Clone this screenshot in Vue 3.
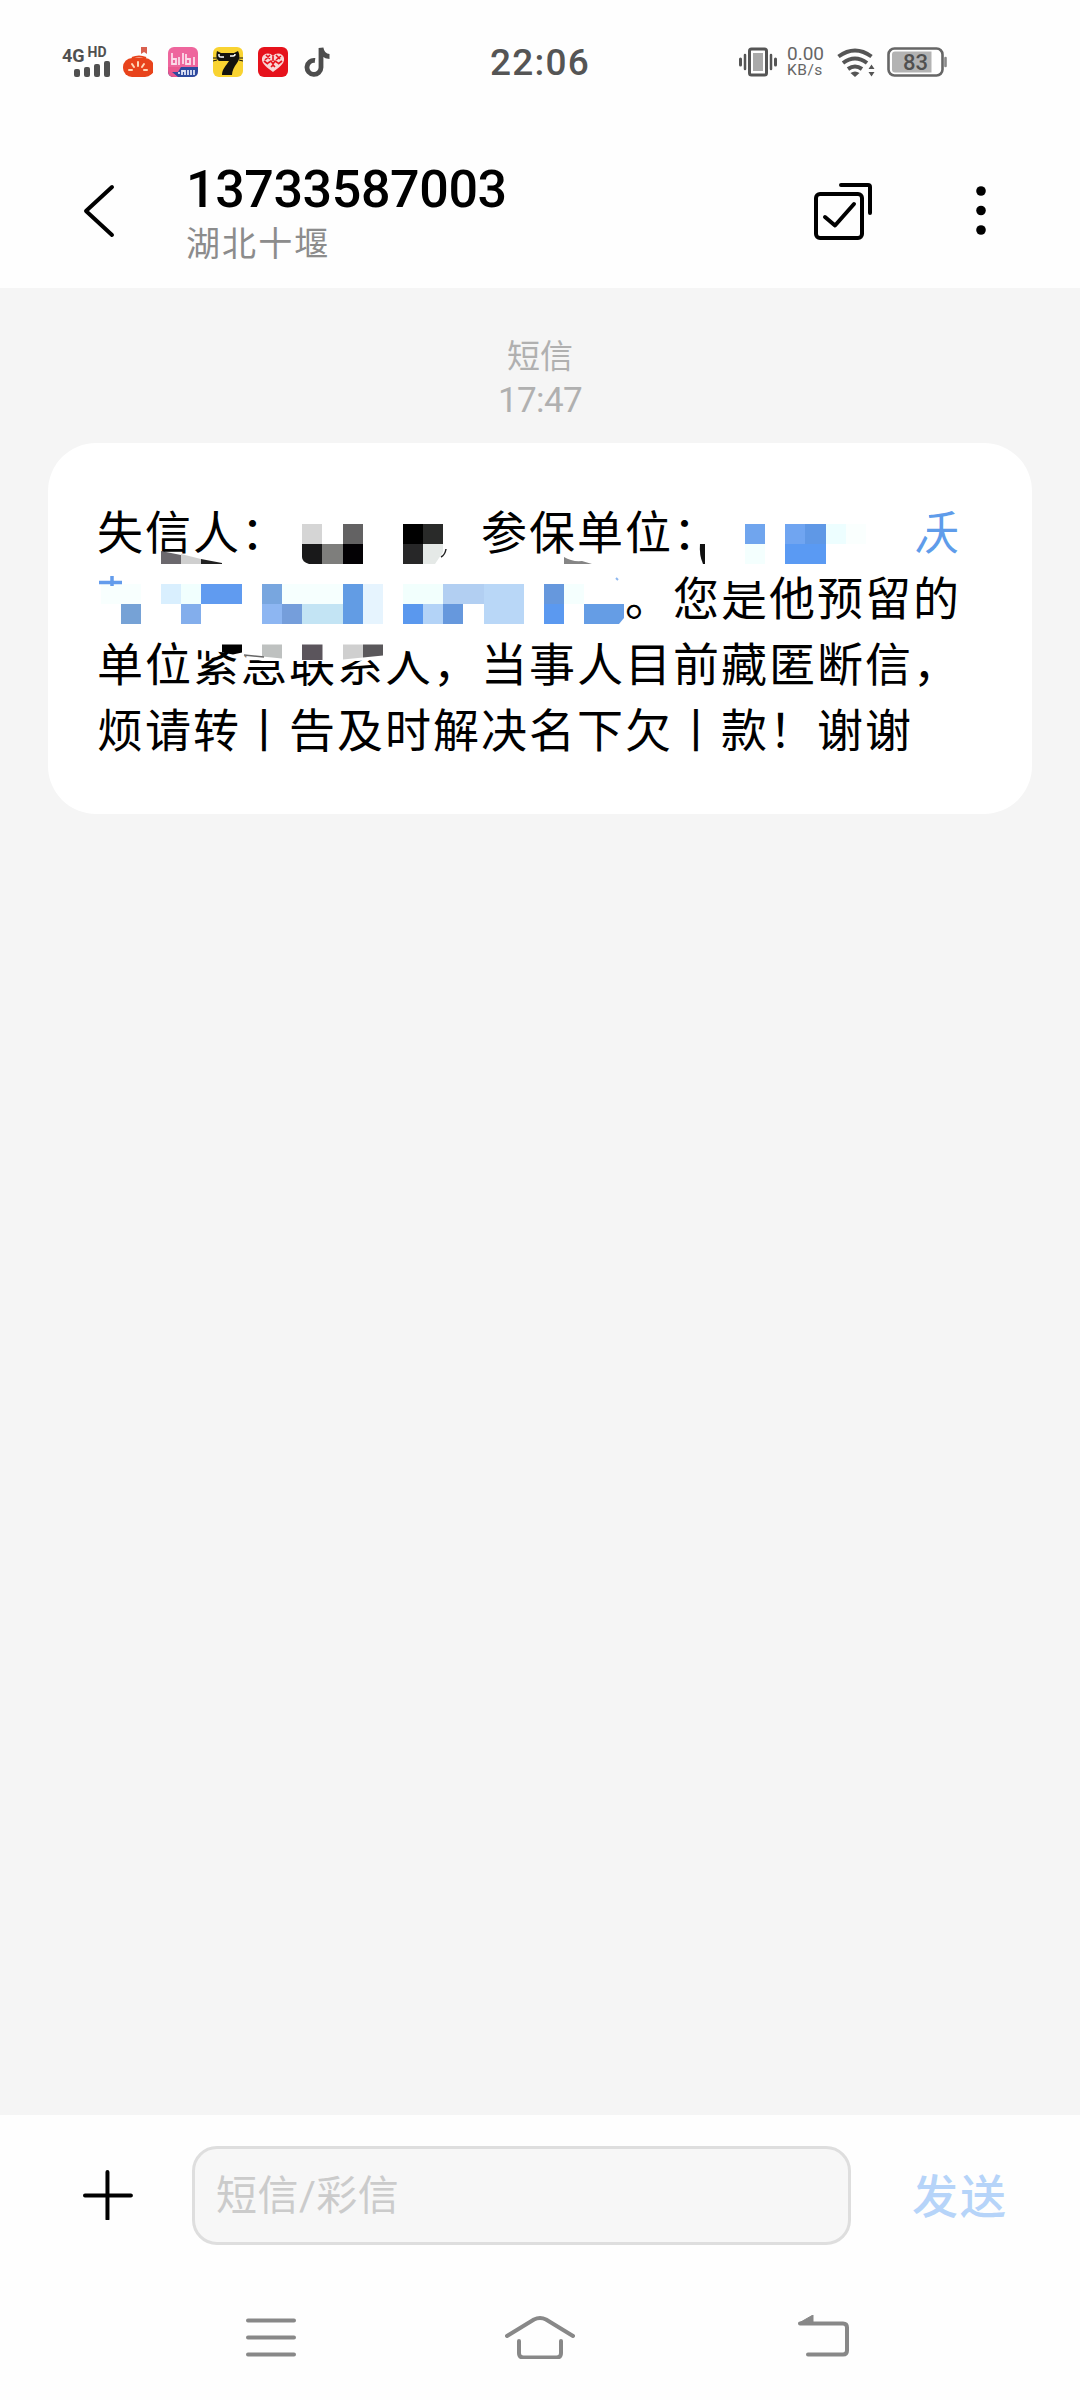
<template>
  <div class="phone">
    <div class="status-bar">
      <div class="status-left">
        <svg class="signal" width="46" height="34" viewBox="0 0 46 34">
          <text x="0" y="17" font-size="18" font-weight="700">4G</text>
          <text x="25.5" y="12" font-size="14" font-weight="700">HD</text>
          <rect x="12" y="24" width="6" height="8" rx="2" />
          <rect x="22" y="22" width="6" height="10" rx="2" />
          <rect x="32" y="19" width="6" height="13" rx="2" />
          <rect x="42" y="16" width="6" height="16" rx="2" />
        </svg>
        <svg width="30" height="30" viewBox="0 0 30 30">
          <path d="M18 0h6v7l-3-2-3 2z" fill="#d9604f" />
          <rect x="0" y="11" width="31" height="19" rx="9" fill="#e8431b" />
          <path d="M9 11q7-3 14 0" stroke="#e8431b" stroke-width="2" fill="none" />
          <path
            d="M15 15v4M9 17l2 3M21 17l-2 3M6 23l3 0M24 23h-3"
            stroke="#ffd9b8"
            stroke-width="2"
            stroke-linecap="round"
          />
        </svg>
        <svg width="30" height="30" viewBox="0 0 30 30">
          <rect width="30" height="30" rx="6" fill="#ee669d" />
          <path d="M0 20h30v4q0 6-6 6H6q-6 0-6-6z" fill="#2c4a9e" />
          <path d="M0 20h13l-3 5H4l6 5H6q-6 0-6-6z" fill="#e9578f" />
          <path
            d="M4 6v11h4v-5H4M11 10v8M15 6v11M18 7v10h4v-5h-4M26 10v8"
            stroke="#fbdce9"
            stroke-width="1.8"
            fill="none"
          />
          <path d="M11 27v-2M14 28v-4h3v4M20 28v-5M23 28v-5M26 28v-5" stroke="#dfe4f5" stroke-width="1.8" fill="none" />
        </svg>
        <svg width="30" height="30" viewBox="0 0 30 30">
          <rect width="30" height="30" rx="6" fill="#f9d331" />
          <path
            d="M4 4l4 2h13l4-2c2 4 2 8-1 12-3 4-5 8-5 12H9c0-6 4-9 7-14H6C3 12 3 8 4 4z"
            fill="#14130e"
          />
          <path d="M6 7v2q0 1 2 1h3M17 9h3q2 0 2-2" stroke="#fff" stroke-width="1.5" fill="none" />
          <path d="M0 11h4M0 14l4-1M26 11h4M26 13l4 1" stroke="#14130e" />
        </svg>
        <svg width="30" height="30" viewBox="0 0 30 30">
          <rect width="30" height="30" rx="6" fill="#e6121c" />
          <path
            d="M15 25C10 21 3 17 4 11c1-5 8-6 11-2 3-4 10-3 11 2 1 6-6 10-11 14z"
            fill="#f8d6d5"
          />
          <path
            d="M8 8l4 4M12 8l-5 5M18 8l4 4M23 9l-5 4M10 16l3-2 2 3 2-3 3 2M13 20l2-2 2 2M15 9v5M6 14l4 3M24 14l-4 3"
            stroke="#e6121c"
            stroke-width="1.6"
            fill="none"
          />
        </svg>
        <svg width="30" height="30" viewBox="0 0 30 30">
          <path
            d="M12 13.5a7 7 0 1 0 6 7V1c1 6 4 8.500 8.500 8.500"
            stroke="#4d4d4d"
            stroke-width="4.800"
            fill="none"
          />
        </svg>
      </div>
      <div class="clock">22:06</div>
      <div class="status-right">
        <svg width="38" height="30" viewBox="0 0 38 30">
          <rect x="10.500" y="2" width="17" height="26" rx="2" fill="#fff" stroke="#555" stroke-width="3" />
          <rect x="14" y="6" width="10" height="18" fill="#aaa" />
          <path d="M6 8v14M32 8v14" stroke="#555" stroke-width="2.500" stroke-linecap="round" />
          <path d="M1.500 12v6M36.500 12v6" stroke="#555" stroke-width="3" stroke-linecap="round" />
        </svg>
        <div class="net-speed">
          <span>0.00</span>
          <span>KB/s</span>
        </div>
        <svg width="40" height="30" viewBox="0 0 40 30">
          <g fill="none" stroke="#555" stroke-width="4">
            <path d="M1.500 9.500q16.500-12 33 0" />
            <path d="M6 16q12-9 24 0" />
            <path d="M11 22q7-5 14 0" />
          </g>
          <path d="M13.500 26q4.500-3 9 0L18 30z" fill="#555" />
          <path d="M31.500 22l3-4.500 3 4.500zM31.500 25h6l-3 4.500z" fill="#555" />
        </svg>
        <svg class="battery" width="61" height="30" viewBox="0 0 61 30">
          <rect x="1.500" y="1.500" width="54" height="27" rx="6" fill="#fff" stroke="#666" stroke-width="2.600" />
          <path d="M8 4.500h36.500v21H8q-3 0-3-3v-15q0-3 3-3z" fill="#b3b3b3" />
          <path d="M58.500 11v8" stroke="#888" stroke-width="2.600" stroke-linecap="round" />
          <text x="16" y="23" font-size="22" font-weight="500" textLength="25">83</text>
        </svg>
      </div>
    </div>

    <header class="header">
      <svg class="back" width="34" height="54" viewBox="0 0 34 54">
        <path d="M29 3L3 27l26 24" />
      </svg>
      <div class="contact">
        <div class="number">13733587003</div>
        <div class="region">湖北十堰</div>
      </div>
      <svg class="select" width="58" height="58" viewBox="0 0 58 58">
        <rect x="2" y="12" width="46" height="44" rx="4" />
        <path d="M11 35l10 8.500L40 22" />
        <path d="M27 3h27q2 0 2 2v26" />
      </svg>
      <svg width="10" height="50" viewBox="0 0 10 50">
        <circle cx="5" cy="5" r="4.800" />
        <circle cx="5" cy="24.500" r="4.800" />
        <circle cx="5" cy="44" r="4.800" />
      </svg>
    </header>

    <main class="thread">
      <div class="stamp">
        <span class="kind">短信</span>
        <span class="time">17:47</span>
      </div>
      <div class="bubble">
        <p>失信人：　　　　参保单位：　　　　<span class="link">沃</span></p>
        <p>　　　　　　　　　　　。您是他预留的</p>
        <p>单位紧急联系人，当事人目前藏匿断信，</p>
        <p>烦请转丨告及时解决名下欠丨款！谢谢</p>
        <!-- pixelated areas over the private parts of the message -->
        <svg class="mosaic" width="984" height="371" viewBox="48 443 984 371">
          <path d="M186 638h50l14 12h150l20 3v-15h-20v14l-16 6-34 3-80 0-28-7-56-5z" fill="#fff" />
          <path d="M240 640h140v19l-22 2h-96l-22-6z" fill="#fff" />
          <path d="M724 574h36v7h-36z" fill="#fff" />
          <path d="M912 508h18l-4 26h-14z" fill="#fff" />
          <rect
            v-for="(b, i) in blocks"
            :key="i"
            :x="b[0]"
            :y="b[1]"
            :width="b[2]"
            :height="b[3]"
            :fill="b[4]"
            shape-rendering="crispEdges"
          />
          <path d="M161 551l20 4v9h-20z" fill="#6b686d" />
          <path d="M181 554l20 5v5h-20z" fill="#cfcfcf" />
          <path d="M201 559l21 4v1h-21z" fill="#222" />
          <path d="M302 544h20v20h-13q-7-2-7-7z" fill="#19191a" />
          <path d="M423 544h20v8l-8 12h-12z" fill="#e5e9e7" />
          <path d="M446 549q-1 6-5 8" stroke="#222" stroke-width="1.500" fill="none" />
          <path d="M564 557q8 5 18 4l10 3h-28z" fill="#858585" />
          <path d="M700 544h5v20h-2q-4-9-3-20z" fill="#111" />
          <path d="M222 644.500h20v8l-9 2-11-2z" fill="#000" />
          <path d="M262 644.500h20v14l-20-2z" fill="#bec1c0" />
          <path d="M302 644.500h20.500v15.500h-20.500z" fill="#5b555c" />
          <path d="M343 644.500h20v13l-20 2z" fill="#cfcfcf" />
          <path d="M363 644.500h20v11l-20 2z" fill="#5a585b" />
          <path d="M244 655l20 2" stroke="#666" stroke-width="1.500" />
          <path d="M584 604h40v14l-5 6h-35z" fill="#659de5" />
          <path d="M99 582.500h23M112 576v10" stroke="#639cec" stroke-width="3.500" fill="none" />
          <path d="M616 578l2 2" stroke="#8db7ef" stroke-width="2" />
        </svg>
      </div>
    </main>

    <footer class="composer">
      <svg class="plus" width="50" height="50" viewBox="0 0 50 50">
        <path d="M2 25.500h46M24.500 2v47" />
      </svg>
      <div class="input">短信/彩信</div>
      <div class="send">发送</div>
    </footer>

    <nav class="nav">
      <svg width="50" height="44" viewBox="0 0 50 44">
        <path d="M2 5.500h46M2 22.500h46M2 39.500h46" />
      </svg>
      <svg class="home" width="70" height="44" viewBox="0 0 70 44">
        <path d="M2 21L29 4.500q6-3 12 0L68 21" />
        <path d="M14 26v12q0 4.500 4.500 4.500h33q4.500 0 4.500-4.500V26" />
      </svg>
      <svg width="52" height="44" viewBox="0 0 52 44">
        <path d="M2 8.500h43q4 0 4 4v23q0 4-4 4H10" />
        <path class="tip" d="M1 8L15 0v8z" />
      </svg>
    </nav>
  </div>
</template>

<script setup>
// x, y, width, height, colour
const blocks = [
  [302, 524, 20, 20, "#d5d5d5"],
  [342.5, 524, 20, 20, "#636263"],
  [322, 544, 20.5, 20, "#7e7e7c"],
  [342.5, 544, 20, 20, "#030104"],
  [403, 524, 20, 20, "#000"],
  [423, 524, 20, 20, "#292a29"],
  [403, 544, 20, 20, "#272728"],
  [745, 524, 20, 20, "#70a5ee"],
  [745, 544, 20, 20, "#f4fffe"],
  [785, 524, 20, 20, "#70a5f1"],
  [805, 524, 21, 20, "#5f98e6"],
  [785, 544, 41, 20, "#5a9af3"],
  [826, 524, 20, 20, "#edfeff"],
  [846, 524, 20, 20, "#fafffe"],
  [101, 584, 40, 20, "#f8fffe"],
  [121, 604, 20, 20, "#76a2d6"],
  [161, 584, 20, 20, "#d9effe"],
  [181, 584, 20, 20, "#f1fffe"],
  [201, 584, 41, 20, "#609bf0"],
  [181, 604, 20, 20, "#83aeec"],
  [262, 584, 20, 20, "#78a6df"],
  [282, 584, 60.5, 20, "#f6fffe"],
  [262, 604, 20, 20, "#8db6f2"],
  [282, 604, 20, 20, "#759edb"],
  [302, 604, 40.5, 20, "#c3e4f4"],
  [342.5, 584, 20, 40, "#629ce4"],
  [363, 584, 20, 40, "#e6f4fe"],
  [403, 584, 40, 20, "#f2fffd"],
  [403, 604, 20, 20, "#5a98ee"],
  [423, 604, 20, 20, "#b3d3f7"],
  [443, 584, 41, 20, "#b2cff2"],
  [443, 604, 20, 20, "#6698dd"],
  [484, 584, 40, 40, "#b9d7f7"],
  [544, 584, 20, 20, "#6698dd"],
  [544, 604, 20, 20, "#5b99f0"],
  [564, 584, 20, 20, "#f5fffe"],
];
</script>

<style>
body {
  margin: 0;
  background-color: #fff;
}
</style>

<style scoped>
.phone {
  width: 1080px;
  height: 2400px;
  display: flex;
  flex-direction: column;
  background-color: #fefefe;
  font-family: Roboto, "Noto Sans CJK SC", sans-serif;
  overflow: hidden;
}
.status-bar {
  height: 124px;
  padding: 0 62px;
  box-sizing: border-box;
  display: grid;
  grid-template-columns: 1fr auto 1fr;
  align-items: center;
  color: #555;
}
.status-left,
.status-right {
  display: flex;
  align-items: center;
}
.status-left {
  gap: 15px;
}
.status-right {
  justify-content: flex-end;
  gap: 10px;
  margin-right: 70px;
}
.signal,
.battery {
  fill: #505050;
  overflow: visible;
}
.clock {
  font-size: 37px;
  font-weight: 500;
  letter-spacing: 1.2px;
}
.net-speed {
  width: 40px;
  display: flex;
  flex-direction: column;
  font-size: 19px;
  line-height: 17px;
  color: #666;
}
.net-speed span:last-child {
  font-size: 15.5px;
  letter-spacing: 0.5px;
}
.header {
  height: 164px;
  padding: 9px 94px 0 83px;
  box-sizing: border-box;
  display: flex;
  align-items: center;
}
.back,
.select,
.plus {
  fill: none;
  stroke: #000;
  stroke-width: 4;
  stroke-linecap: round;
  stroke-linejoin: round;
}
.contact {
  flex: 1;
  margin-left: 69px;
  padding-top: 4px;
}
.number {
  font-size: 52px;
  font-weight: 500;
  line-height: 62px;
  color: #000;
  letter-spacing: -0.4px;
}
.region {
  font-size: 34px;
  line-height: 46px;
  letter-spacing: 2.1px;
  color: #8c8c8c;
}
.select {
  margin-right: 104px;
}
.thread {
  flex: 1;
  padding: 47px 48px 0;
  background-color: #f5f5f5;
}
.stamp {
  height: 108px;
  display: flex;
  flex-direction: column;
  align-items: center;
  color: #b0b0b0;
}
.kind {
  font-size: 33px;
  line-height: 44px;
}
.time {
  font-size: 35px;
  line-height: 44px;
  letter-spacing: -0.6px;
}
.bubble {
  position: relative;
  height: 371px;
  padding: 53px 48px 0 49px;
  box-sizing: border-box;
  border-radius: 48px;
  background-color: #fff;
}
.bubble p {
  margin: 0;
  font-family: "Noto Sans CJK SC", sans-serif;
  font-size: 46px;
  line-height: 66px;
  letter-spacing: 2px;
  text-spacing-trim: space-all;
  white-space: pre;
  color: #000;
}
.bubble .link {
  color: #5f9cea;
}
.mosaic {
  position: absolute;
  top: 0;
  left: 0;
}
.composer {
  height: 160px;
  padding: 0 72px 0 83px;
  box-sizing: border-box;
  display: flex;
  align-items: center;
}
.input {
  width: 660px;
  height: 99px;
  margin-left: 59px;
  padding-left: 21px;
  box-sizing: border-box;
  border: 3px solid #dedede;
  border-radius: 25px;
  background-color: #f7f7f7;
  font-size: 41px;
  line-height: 95px;
  letter-spacing: 0.5px;
  color: #cbcbcb;
}
.send {
  margin-left: 61px;
  padding-bottom: 4px;
  font-size: 46px;
  font-weight: 500;
  letter-spacing: 2px;
  white-space: nowrap;
  color: #b6d4f9;
}
.nav {
  height: 125px;
  padding: 0 230px 2px 246px;
  box-sizing: border-box;
  display: flex;
  justify-content: space-between;
  align-items: center;
}
.nav svg {
  fill: none;
  stroke: #888;
  stroke-width: 4;
  stroke-linecap: round;
  stroke-linejoin: round;
}
.nav .home {
  margin-right: 14px;
}
.nav .tip {
  fill: #888;
  stroke-width: 1;
}
</style>
